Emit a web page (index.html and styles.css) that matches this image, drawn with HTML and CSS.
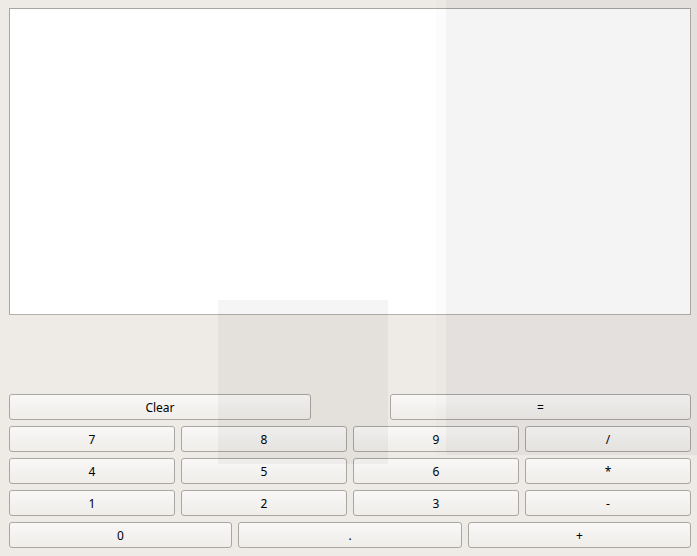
FILE: index.html
```html
<!DOCTYPE html>
<html>
<head>
<meta charset="utf-8">
<link rel="stylesheet" href="styles.css">
</head>
<body>
<div class="calc">
  <div class="display"></div>
  <div class="keys">
    <div class="row-top">
      <button class="btn wide">Clear</button>
      <button class="btn wide eq">=</button>
    </div>
    <div class="grid4">
      <button class="btn">7</button>
      <button class="btn">8</button>
      <button class="btn">9</button>
      <button class="btn">/</button>
      <button class="btn">4</button>
      <button class="btn">5</button>
      <button class="btn">6</button>
      <button class="btn">*</button>
      <button class="btn">1</button>
      <button class="btn">2</button>
      <button class="btn">3</button>
      <button class="btn">-</button>
    </div>
    <div class="grid3">
      <button class="btn">0</button>
      <button class="btn">.</button>
      <button class="btn">+</button>
    </div>
  </div>
</div>
<div class="shade shade-right-soft"></div>
<div class="shade shade-right"></div>
<div class="shade shade-mid"></div>
</body>
</html>
```

FILE: styles.css
```css
html, body {
  margin: 0;
  padding: 0;
  width: 697px;
  height: 556px;
  background: #eeebe7;
  font-family: "Noto Sans", "Open Sans", sans-serif;
  overflow: hidden;
}

.calc {
  padding: 8px 6px 0 9px;
  display: flex;
  flex-direction: column;
}

.display {
  height: 307px;
  box-sizing: border-box;
  background: #ffffff;
  border: 1px solid #b3afab;
  border-top-color: #a9a5a1;
  border-left-color: #a9a5a1;
}

.keys {
  margin-top: 79px;
  display: flex;
  flex-direction: column;
  gap: 6px;
}

.row-top {
  display: flex;
  justify-content: space-between;
}

.row-top .wide {
  width: 302px;
}

.row-top .eq {
  width: 301px;
}

.grid4 {
  display: grid;
  grid-template-columns: repeat(4, 166px);
  column-gap: 6px;
  row-gap: 6px;
}

.grid3 {
  display: grid;
  grid-template-columns: 223px 224px 223px;
  column-gap: 6px;
}

.btn {
  height: 26px;
  margin: 0;
  padding: 2px 0 0 0;
  box-sizing: border-box;
  border: 1px solid #aaa6a2;
  border-radius: 3px;
  background: linear-gradient(to bottom, #f9f8f7 0%, #efedea 100%);
  font-family: "Noto Sans", "Open Sans", sans-serif;
  font-size: 12px;
  color: #000;
  line-height: 22px;
  text-align: center;
}

.shade {
  position: absolute;
  pointer-events: none;
}

.shade-right-soft {
  left: 436px;
  top: 0;
  width: 10px;
  height: 455px;
  background: rgba(0, 0, 0, 0.012);
}

.shade-right {
  left: 446px;
  top: 0;
  width: 251px;
  height: 455px;
  background: rgba(0, 0, 0, 0.045);
}

.shade-mid {
  left: 218px;
  top: 300px;
  width: 170px;
  height: 164px;
  background: rgba(0, 0, 0, 0.04);
}
```
